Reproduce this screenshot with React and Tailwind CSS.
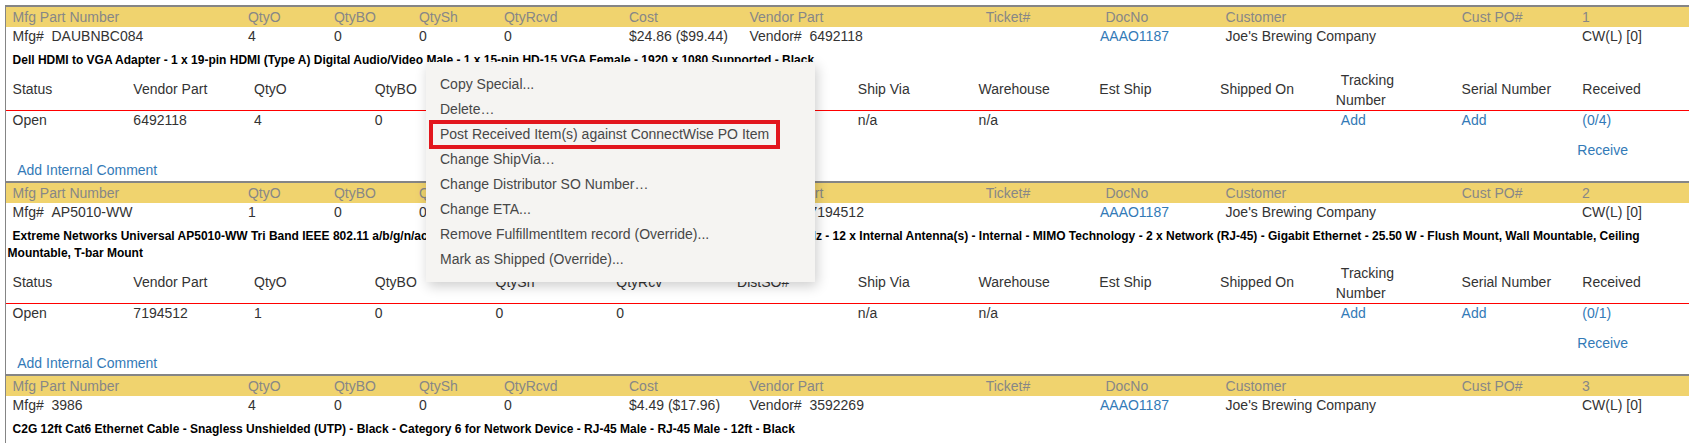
import React from "react";

const H =
  "grid grid-cols-[235.4px_86px_85px_85px_125px_120.5px_236.2px_119.8px_120.1px_236.2px_120.2px_1fr] pl-[6.6px]";
const S = "grid grid-cols-[repeat(13,120.75px)_1fr] pl-[6.6px]";

function Block({ n, mfg, qty, cost, vendor, desc, vp, received }) {
  return (
    <div className="border-t-2 border-[#858585]">
      <div className={`${H} h-[20px] leading-[20px] bg-[#f0d36e] text-[#878787]`}>
        <div>Mfg Part Number</div>
        <div>QtyO</div>
        <div>QtyBO</div>
        <div>QtySh</div>
        <div>QtyRcvd</div>
        <div>Cost</div>
        <div>Vendor Part</div>
        <div>Ticket#</div>
        <div>DocNo</div>
        <div>Customer</div>
        <div>Cust PO#</div>
        <div>{n}</div>
      </div>
      <div className={`${H} h-[18px] leading-[18px] text-[#333333] whitespace-nowrap`}>
        <div>Mfg#&nbsp;&nbsp;{mfg}</div>
        <div>{qty}</div>
        <div>0</div>
        <div>0</div>
        <div>0</div>
        <div>{cost}</div>
        <div>Vendor#&nbsp;&nbsp;{vendor}</div>
        <div></div>
        <div className="ml-[-5.5px] text-[#337ab7]">AAAO1187</div>
        <div>Joe's Brewing Company</div>
        <div></div>
        <div>CW(L) [0]</div>
      </div>
      <div className="mt-[7px] pl-[1.6px] indent-[5px] text-[12px] font-bold leading-[17px] text-black whitespace-nowrap">
        {desc}
      </div>
      <div className={`${S} h-[42px] items-center border-b border-[#ff0000] text-[#333333] whitespace-nowrap`}>
        <div>Status</div>
        <div>Vendor Part</div>
        <div>QtyO</div>
        <div>QtyBO</div>
        <div>QtySh</div>
        <div>QtyRcv</div>
        <div>DistSO#</div>
        <div>Ship Via</div>
        <div>Warehouse</div>
        <div>Est Ship</div>
        <div>Shipped On</div>
        <div className="leading-[20px]">
          <div>Tracking</div>
          <div className="ml-[-5px]">Number</div>
        </div>
        <div>Serial Number</div>
        <div>Received</div>
      </div>
      <div className={`${S} items-start leading-[18px] text-[#333333] whitespace-nowrap`}>
        <div>Open</div>
        <div>{vp}</div>
        <div>{qty}</div>
        <div>0</div>
        <div>0</div>
        <div>0</div>
        <div></div>
        <div>n/a</div>
        <div>n/a</div>
        <div></div>
        <div></div>
        <div className="text-[#337ab7]">Add</div>
        <div className="text-[#337ab7]">Add</div>
        <div className="text-[#337ab7]">
          <div>{received}</div>
          <div className="mt-[12px] ml-[-5px]">Receive</div>
        </div>
      </div>
      <div className="mt-[2px] pb-[2px] pl-[11.2px] leading-[18px] text-[#337ab7]">
        Add Internal Comment
      </div>
    </div>
  );
}

const menuItems = [
  "Copy Special...",
  "Delete\u2026",
  "Post Received Item(s) against ConnectWise PO Item",
  "Change ShipVia\u2026",
  "Change Distributor SO Number\u2026",
  "Change ETA...",
  "Remove FulfillmentItem record (Override)...",
  "Mark as Shipped (Override)...",
];

export default function App() {
  return (
    <div className="relative w-[1689px] h-[443px] overflow-hidden bg-white font-['Liberation_Sans',Arial,sans-serif] text-[14px]">
      <div className="pt-[5px] pl-[5px]">
        <div className="border-l border-[#858585]">
          <Block
            n="1"
            mfg="DAUBNBC084"
            qty="4"
            cost="$24.86 ($99.44)"
            vendor="6492118"
            vp="6492118"
            received="(0/4)"
            desc="Dell HDMI to VGA Adapter - 1 x 19-pin HDMI (Type A) Digital Audio/Video Male - 1 x 15-pin HD-15 VGA Female - 1920 x 1080 Supported - Black"
          />
          <Block
            n="2"
            mfg="AP5010-WW"
            qty="1"
            cost="$795.00 ($795.00)"
            vendor="7194512"
            vp="7194512"
            received="(0/1)"
            desc={
              <>
                Extreme Networks Universal AP5010-WW Tri Band IEEE 802.11 a/b/g/n/ac/ax 7.78 Gbit/s Wireless Access Point - 2.40 GHz, 5.850 GHz, 6.40 GHz - 12 x Internal Antenna(s) - Internal - MIMO Technology - 2 x Network (RJ-45) - Gigabit Ethernet - 25.50 W - Flush Mount, Wall Mountable, Ceiling
                <br />
                Mountable, T-bar Mount
              </>
            }
          />
          <Block
            n="3"
            mfg="3986"
            qty="4"
            cost="$4.49 ($17.96)"
            vendor="3592269"
            vp="3592269"
            received="(0/4)"
            desc="C2G 12ft Cat6 Ethernet Cable - Snagless Unshielded (UTP) - Black - Category 6 for Network Device - RJ-45 Male - RJ-45 Male - 12ft - Black"
          />
        </div>
      </div>

      <div className="absolute left-[426px] top-[62px] w-[389px] h-[220px] bg-[#f5f4f2] shadow-[2px_4px_12px_rgba(0,0,0,0.2)] pt-[10px] text-[14px] text-[#474747]">
        {menuItems.map((t) => (
          <div key={t} className="h-[25px] leading-[25px] pl-[14px] whitespace-nowrap">
            {t}
          </div>
        ))}
        <div className="absolute left-[3px] top-[58px] w-[351px] h-[29px] border-4 border-[#e2161d]"></div>
      </div>
    </div>
  );
}
